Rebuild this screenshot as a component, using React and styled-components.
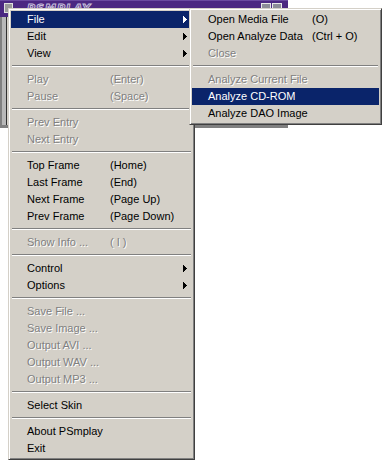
import React from "react";
import styled, { createGlobalStyle } from "styled-components";

const GlobalStyle = createGlobalStyle`
  html, body {
    margin: 0;
    padding: 0;
    background: #ffffff;
  }
`;

const Desktop = styled.div`
  position: relative;
  width: 383px;
  height: 460px;
  overflow: hidden;
  background: #ffffff;
  font-family: Tahoma, "Liberation Sans", Arial, sans-serif;
  font-size: 11px;
`;

const Window = styled.div`
  position: absolute;
  left: 0;
  top: 0;
  width: 288px;
  height: 128px;
  display: flex;
  flex-direction: column;
`;

const TitleBar = styled.div`
  height: 14px;
  background: #4b2882;
  border-top: 1px solid #6a4aa0;
  display: flex;
  align-items: flex-start;
  padding: 2px 4px 0 4px;
  gap: 14px;
`;

const SysIcon = styled.div`
  width: 7px;
  height: 8px;
  border: 1px solid #e0e0e0;
  background: #9a9a9a;
`;

const TitleText = styled.div`
  font-family: "DejaVu Sans", sans-serif;
  font-style: italic;
  font-weight: bold;
  font-size: 11px;
  line-height: 11px;
  letter-spacing: 1px;
  color: #4b2882;
  -webkit-text-stroke: 1px #c8c0dc;
  flex: 1;
`;

const TitleButtons = styled.div`
  display: flex;
  gap: 1px;
  margin-right: 2px;
`;

const TitleButton = styled.div`
  width: 8px;
  height: 8px;
  border: 1px solid #e8e8e8;
  background: #8c8c98;
`;

const WindowBody = styled.div`
  flex: 1;
  background: #b8b8b8;
  border-left: 2px solid #808080;
  border-right: 2px solid #808080;
  border-bottom: 3px solid #808080;
  padding: 0 4px 0 4px;
  display: flex;
`;

const WindowInner = styled.div`
  flex: 1;
  border-left: 1px solid #303030;
  border-right: 1px solid #303030;
  background: #d4d0c8;
`;

const Menu = styled.div`
  position: absolute;
  left: ${(p) => p.$left}px;
  top: ${(p) => p.$top}px;
  width: ${(p) => p.$width}px;
  box-sizing: border-box;
  background: #d4d0c8;
  border: 1px solid;
  border-color: #d4d0c8 #404040 #404040 #d4d0c8;
  box-shadow: inset 1px 1px 0 #ffffff, inset -1px -1px 0 #808080;
  padding: 2px;
  display: flex;
  flex-direction: column;
`;

const Item = styled.div`
  display: flex;
  align-items: center;
  height: 17px;
  line-height: 17px;
  padding-left: 16px;
  white-space: nowrap;
  background: ${(p) => (p.$active ? "#0a246a" : "transparent")};
  color: ${(p) => (p.$active ? "#ffffff" : p.$disabled ? "#808080" : "#000000")};
  text-shadow: ${(p) => (p.$disabled && !p.$active ? "1px 1px 0 #ffffff" : "none")};
`;

const Label = styled.span`
  flex: none;
  width: ${(p) => p.$width}px;
`;

const Shortcut = styled.span`
  flex: none;
`;

const Arrow = styled.svg`
  margin-left: auto;
  margin-right: 5px;
  flex: none;
`;

const Separator = styled.div`
  height: 9px;
  box-sizing: border-box;
  padding: 3px 1px 0 1px;

  &::before {
    content: "";
    display: block;
    height: 1px;
    background: #808080;
    border-bottom: 1px solid #ffffff;
  }
`;

const mainItems = [
  { label: "File", sub: true, active: true },
  { label: "Edit", sub: true },
  { label: "View", sub: true },
  "-",
  { label: "Play", key: "(Enter)", disabled: true },
  { label: "Pause", key: "(Space)", disabled: true },
  "-",
  { label: "Prev Entry", disabled: true },
  { label: "Next Entry", disabled: true },
  "-",
  { label: "Top Frame", key: "(Home)" },
  { label: "Last Frame", key: "(End)" },
  { label: "Next Frame", key: "(Page Up)" },
  { label: "Prev Frame", key: "(Page Down)" },
  "-",
  { label: "Show Info ...", key: "( I )", disabled: true },
  "-",
  { label: "Control", sub: true },
  { label: "Options", sub: true },
  "-",
  { label: "Save File ...", disabled: true },
  { label: "Save Image ...", disabled: true },
  { label: "Output AVI ...", disabled: true },
  { label: "Output WAV ...", disabled: true },
  { label: "Output MP3 ...", disabled: true },
  "-",
  { label: "Select Skin" },
  "-",
  { label: "About PSmplay" },
  { label: "Exit" },
];

const fileItems = [
  { label: "Open Media File", key: "(O)" },
  { label: "Open Analyze Data", key: "(Ctrl + O)" },
  { label: "Close", disabled: true },
  "-",
  { label: "Analyze Current File", disabled: true },
  { label: "Analyze CD-ROM", active: true },
  { label: "Analyze DAO Image" },
];

function PopupMenu({ items, left, top, width, labelWidth }) {
  return (
    <Menu $left={left} $top={top} $width={width}>
      {items.map((it, i) =>
        it === "-" ? (
          <Separator key={i} />
        ) : (
          <Item key={i} $active={it.active} $disabled={it.disabled}>
            <Label $width={labelWidth}>{it.label}</Label>
            {it.key && <Shortcut>{it.key}</Shortcut>}
            {it.sub && (
              <Arrow width="4" height="7" viewBox="0 0 4 7" shapeRendering="crispEdges">
                <polygon points="0,0 4,3.5 0,7" fill={it.active ? "#ffffff" : "#000000"} />
              </Arrow>
            )}
          </Item>
        )
      )}
    </Menu>
  );
}

export default function App() {
  return (
    <>
      <GlobalStyle />
      <Desktop>
        <Window>
          <TitleBar>
            <SysIcon />
            <TitleText>PSMPLAY</TitleText>
            <TitleButtons>
              <TitleButton />
              <TitleButton />
            </TitleButtons>
          </TitleBar>
          <WindowBody>
            <WindowInner />
          </WindowBody>
        </Window>
        <PopupMenu items={mainItems} left={8} top={8} width={187} labelWidth={83} />
        <PopupMenu items={fileItems} left={189} top={8} width={193} labelWidth={104} />
      </Desktop>
    </>
  );
}
